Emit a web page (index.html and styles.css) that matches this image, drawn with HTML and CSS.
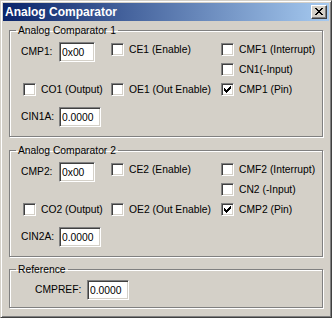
FILE: index.html
```html
<!DOCTYPE html>
<html lang="en">
<head>
  <meta charset="UTF-8" />
  <title>Analog Comparator</title>
  <link rel="stylesheet" href="styles.css">
</head>
<body>
  <div class="window">
    <div class="titlebar">
      <span class="title">Analog Comparator</span>
      <span class="close">
        <svg width="8" height="7" viewBox="0 0 8 7"><path d="M0 0h2v1h-2z M6 0h2v1h-2z M1 1h2v1h-2z M5 1h2v1h-2z M2 2h4v1h-4z M3 3h2v1h-2z M2 4h4v1h-4z M1 5h2v1h-2z M5 5h2v1h-2z M0 6h2v1h-2z M6 6h2v1h-2z" fill="#000"/></svg>
      </span>
    </div>

    <fieldset class="group">
      <legend>Analog Comparator 1</legend>
      <div class="inner">
        <div class="grid">
          <div class="field"><span class="lbl">CMP1:</span><input class="edit" value="0x00"></div>
          <label class="chk"><span class="box"></span>CE1 (Enable)</label>
          <label class="chk"><span class="box"></span>CMF1 (Interrupt)</label>
          <label class="chk col3"><span class="box"></span>CN1(-Input)</label>
          <label class="chk col1"><span class="box"></span>CO1 (Output)</label>
          <label class="chk"><span class="box"></span>OE1 (Out Enable)</label>
          <label class="chk"><span class="box"><svg width="7" height="7" viewBox="0 0 7 7"><path d="M0 2h1v1h1v1h1v-1h1v-1h1v-1h1v-1h1v3h-1v1h-1v1h-1v1h-1v1h-1v-1h-1v-1h-1v-1h-1z" fill="#000"/></svg></span>CMP1 (Pin)</label>
        </div>
        <div class="field cin"><span class="lbl">CIN1A:</span><input class="edit wide" value="0.0000"></div>
      </div>
    </fieldset>

    <fieldset class="group">
      <legend>Analog Comparator 2</legend>
      <div class="inner">
        <div class="grid">
          <div class="field"><span class="lbl">CMP2:</span><input class="edit" value="0x00"></div>
          <label class="chk"><span class="box"></span>CE2 (Enable)</label>
          <label class="chk"><span class="box"></span>CMF2 (Interrupt)</label>
          <label class="chk col3"><span class="box"></span>CN2 (-Input)</label>
          <label class="chk col1"><span class="box"></span>CO2 (Output)</label>
          <label class="chk"><span class="box"></span>OE2 (Out Enable)</label>
          <label class="chk"><span class="box"><svg width="7" height="7" viewBox="0 0 7 7"><path d="M0 2h1v1h1v1h1v-1h1v-1h1v-1h1v-1h1v3h-1v1h-1v1h-1v1h-1v1h-1v-1h-1v-1h-1v-1h-1z" fill="#000"/></svg></span>CMP2 (Pin)</label>
        </div>
        <div class="field cin"><span class="lbl">CIN2A:</span><input class="edit wide" value="0.0000"></div>
      </div>
    </fieldset>

    <fieldset class="group ref">
      <legend>Reference</legend>
      <div class="inner">
        <div class="field"><span class="lbl">CMPREF:</span><input class="edit wide" value="0.0000"></div>
      </div>
    </fieldset>
  </div>
</body>
</html>
```

FILE: styles.css
```css
body { margin: 0; font-family: "Liberation Sans", Arial, sans-serif; font-size: 10.3px; color: #000; }

.window { box-sizing: border-box; width: 332px; height: 318px; padding: 2px; background: #d4d0c8; border: 1px solid; border-color: #d4d0c8 #404040 #404040 #d4d0c8; box-shadow: inset 1px 1px #fff, inset -1px -1px #808080; }

.titlebar { height: 18px; display: flex; align-items: center; justify-content: space-between; padding: 0 2px; background: linear-gradient(to right, #0a246a, #a6caf0); }
.title { color: #fff; font-weight: bold; font-size: 12px; line-height: 18px; white-space: nowrap; }
.close { box-sizing: border-box; width: 16px; height: 14px; padding: 2px 0 0 3px; background: #d4d0c8; border: 1px solid; border-color: #fff #404040 #404040 #fff; box-shadow: inset -1px -1px #808080; }
.close svg { display: block; }

.group { box-sizing: border-box; width: 314px; min-width: 0; margin: 7px 0 0 6px; padding: 5px 0 9px 0; border: 1px solid #808080; box-shadow: inset 1px 1px #fff, 1px 1px #fff; }
.group:first-of-type { margin-top: 3px; }
.group legend { margin-left: 6px; padding: 0 2px; line-height: 13px; }
.inner { padding-left: 11px; }

.grid { display: grid; grid-template-columns: 90px 110px 1fr; grid-auto-rows: 20px; align-items: start; }
.col1 { grid-column: 1; margin-left: 2px; }
.col3 { grid-column: 3; }

.field { display: flex; align-items: center; height: 20px; }
.lbl { width: 38px; line-height: 20px; white-space: nowrap; }
.cin { margin-top: 5px; }

.edit { box-sizing: border-box; width: 36px; height: 20px; margin: 0; padding: 0 2px; border: 1px solid; border-color: #808080 #fff #fff #808080; box-shadow: inset 1px 1px #404040, inset -1px -1px #d4d0c8; background: #fff; font: inherit; color: #000; outline: none; }
.edit.wide { width: 42px; }

.chk { display: flex; align-items: center; height: 13px; margin-top: 1px; line-height: 13px; white-space: nowrap; }
.box { box-sizing: border-box; flex: none; width: 13px; height: 13px; margin-right: 5px; padding: 2px 0 0 2px; border: 1px solid; border-color: #808080 #fff #fff #808080; box-shadow: inset 1px 1px #404040, inset -1px -1px #d4d0c8; background: #fff; }
.box svg { display: block; }

.ref { margin-top: 6px; padding: 4px 0 7px 0; }
.ref .inner { padding-left: 25px; }
.ref .lbl { width: 52px; }
```
